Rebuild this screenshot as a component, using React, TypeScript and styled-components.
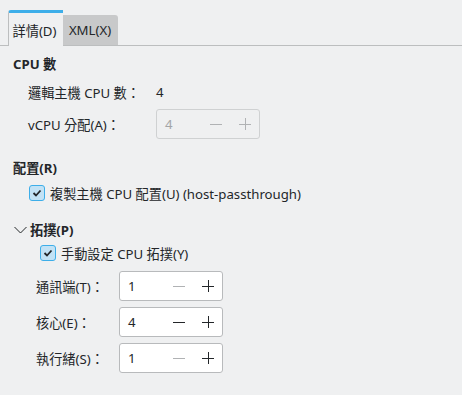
import styled, { createGlobalStyle } from 'styled-components';

const GlobalStyle = createGlobalStyle`
	html, body {
		margin: 0;
		padding: 0;
		background: #eff0f1;
	}
	body {
		font-family: "Noto Sans", "Noto Sans CJK TC", sans-serif;
		font-size: 13.2px;
		color: #232629;
	}
`;

interface SpinProps {
	value: number;
	min?: number;
	disabled?: boolean;
}

function SpinBox({ value, min = 1, disabled = false }: SpinProps) {
	const atMin = value <= min;
	return (
		<Spin disabled={disabled}>
			<SpinValue disabled={disabled}>{value}</SpinValue>
			<SpinButton dim={disabled || atMin}>
				<svg width="12" height="12" viewBox="0 0 12 12">
					<path d="M0 6.5H12" stroke="currentColor" strokeWidth="1" />
				</svg>
			</SpinButton>
			<SpinButton dim={disabled}>
				<svg width="12" height="12" viewBox="0 0 12 12">
					<path d="M0 6.5H12M6.5 0V12" stroke="currentColor" strokeWidth="1" />
				</svg>
			</SpinButton>
		</Spin>
	);
}

function Check({ label }: { label: string }) {
	return (
		<CheckRow>
			<CheckBox>
				<svg width="10" height="10" viewBox="0 0 10 10">
					<path d="M1.5 5L4 7.5L8.5 2.5" fill="none" stroke="#232629" strokeWidth="1.8" />
				</svg>
			</CheckBox>
			<span>{label}</span>
		</CheckRow>
	);
}

export default function App() {
	return (
		<Page>
			<GlobalStyle />
			<TabBar>
				<Tab active>詳情(D)</Tab>
				<Tab>XML(X)</Tab>
			</TabBar>
			<Content>
				<Header>CPU 數</Header>
				<Block>
					<FormRow indent={15} labelWidth={128} top={4}>
						<Label>邏輯主機 CPU 數：</Label>
						<span>4</span>
					</FormRow>
					<FormRow indent={15} labelWidth={128} top={2}>
						<Label>vCPU 分配(A)：</Label>
						<SpinBox value={4} disabled />
					</FormRow>
				</Block>

				<Header top={18}>配置(R)</Header>
				<Indent px={16} top={6}>
					<Check label="複製主機 CPU 配置(U) (host-passthrough)" />
				</Indent>

				<Header top={16}>
					<Chevron>
						<svg width="13" height="8" viewBox="0 0 13 8">
							<path d="M0.5 1L6.5 7L12.5 1" fill="none" stroke="#232629" strokeWidth="1" />
						</svg>
					</Chevron>
					拓撲(P)
				</Header>
				<Indent px={27} top={4}>
					<Check label="手動設定 CPU 拓撲(Y)" />
				</Indent>
				<Block top={8}>
					<FormRow indent={23} labelWidth={83} top={0}>
						<Label>通訊端(T)：</Label>
						<SpinBox value={1} />
					</FormRow>
					<FormRow indent={23} labelWidth={83} top={6}>
						<Label>核心(E)：</Label>
						<SpinBox value={4} />
					</FormRow>
					<FormRow indent={23} labelWidth={83} top={6}>
						<Label>執行緒(S)：</Label>
						<SpinBox value={1} />
					</FormRow>
				</Block>
			</Content>
		</Page>
	);
}

const Page = styled.div`
	width: 462px;
	height: 395px;
	overflow: hidden;
`;

const TabBar = styled.div`
	display: flex;
	align-items: flex-end;
	padding: 10px 0 0 8px;
	height: 35px;
	border-bottom: 1px solid #bcbebf;
`;

const Tab = styled.div<{ active?: boolean }>`
	box-sizing: border-box;
	display: flex;
	align-items: center;
	justify-content: center;
	height: ${({ active }) => (active ? '36px' : '30px')};
	margin-bottom: ${({ active }) => (active ? '-1px' : '0')};
	padding: ${({ active }) => (active ? '1px 6px 0 3px' : '0 6px 0 5px')};
	background: ${({ active }) => (active ? '#eff0f1' : '#c8c9ca')};
	border-top: ${({ active }) => (active ? '3px solid #3daee9' : 'none')};
	border-left: ${({ active }) => (active ? '1px solid #bcbebf' : 'none')};
	border-radius: ${({ active }) => (active ? '3px 0 0 0' : '0 3px 0 0')};
	min-width: 55px;
`;

const Content = styled.div`
	display: flex;
	flex-direction: column;
	padding: 7px 0 0 13px;
`;

const Header = styled.div<{ top?: number }>`
	display: flex;
	align-items: center;
	height: 20px;
	margin-top: ${({ top }) => top ?? 0}px;
	font-weight: bold;
`;

const Chevron = styled.span`
	display: inline-flex;
	width: 16px;
	margin-left: 1px;
	margin-top: 1px;
`;

const Block = styled.div<{ top?: number }>`
	display: flex;
	flex-direction: column;
	margin-top: ${({ top }) => top ?? 0}px;
`;

const FormRow = styled.div<{ indent: number; labelWidth: number; top: number }>`
	display: grid;
	grid-template-columns: ${({ labelWidth }) => labelWidth}px auto;
	align-items: center;
	height: 30px;
	margin-top: ${({ top }) => top}px;
	padding-left: ${({ indent }) => indent}px;
`;

const Label = styled.span`
	white-space: nowrap;
`;

const Indent = styled.div<{ px: number; top: number }>`
	padding-left: ${({ px }) => px}px;
	margin-top: ${({ top }) => top}px;
`;

const CheckRow = styled.label`
	display: flex;
	align-items: center;
	height: 20px;
	gap: 5px;
`;

const CheckBox = styled.span`
	box-sizing: border-box;
	display: inline-flex;
	align-items: center;
	justify-content: center;
	width: 16px;
	height: 16px;
	border: 1px solid #3daee9;
	border-radius: 3px;
	background: #c2e2f5;
`;

const Spin = styled.div<{ disabled: boolean }>`
	box-sizing: border-box;
	display: flex;
	align-items: center;
	width: 104px;
	height: 30px;
	padding: 0 8px 0 8px;
	border: 1px solid ${({ disabled }) => (disabled ? '#cfd1d2' : '#b8babc')};
	border-radius: 3px;
	background: ${({ disabled }) => (disabled ? '#eff0f1' : '#ffffff')};
`;

const SpinValue = styled.span<{ disabled: boolean }>`
	flex: 1;
	color: ${({ disabled }) => (disabled ? '#a3a5a7' : '#232629')};
`;

const SpinButton = styled.span<{ dim: boolean }>`
	display: inline-flex;
	margin-left: 17px;
	color: ${({ dim }) => (dim ? '#b0b2b4' : '#232629')};
`;
